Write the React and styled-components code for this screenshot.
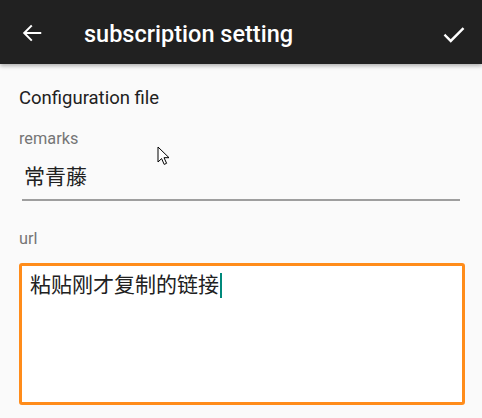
import React from 'react'
import styled, { createGlobalStyle } from 'styled-components'

const GlobalStyle = createGlobalStyle`
  html, body {
    margin: 0;
    padding: 0;
    background: #fafafa;
    font-family: Roboto, "Noto Sans CJK SC", sans-serif;
  }
`

export default function App() {
  return (
    <Page>
      <GlobalStyle />
      <Toolbar>
        <IconButton aria-label="back">
          <svg width="22" height="22" viewBox="0 0 24 24" fill="none" stroke="#fff" strokeWidth="2.2" strokeLinecap="square">
            <path d="M21 12H4M11 4.5L3.5 12l7.5 7.5" />
          </svg>
        </IconButton>
        <Title>subscription setting</Title>
        <IconButton aria-label="save" right>
          <svg width="26" height="26" viewBox="0 0 24 24" fill="none" stroke="#fff" strokeWidth="2.2" strokeLinecap="square">
            <path d="M4 12.5l5 5L20 6.5" />
          </svg>
        </IconButton>
      </Toolbar>
      <Content>
        <Section>Configuration file</Section>
        <Label>remarks</Label>
        <LineInput>常青藤</LineInput>
        <Label url>url</Label>
        <TextBox>
          粘贴刚才复制的链接<Caret />
        </TextBox>
      </Content>
      <Pointer width="14" height="20" viewBox="0 0 14 20">
        <path d="M1 1v15l3.6-3.4 2.6 5.8 2.4-1.1-2.6-5.6H12z" fill="#fff" stroke="#000" strokeWidth="1" strokeLinejoin="round" />
      </Pointer>
    </Page>
  )
}

const Page = styled.div`
  position: relative;
  width: 482px;
  height: 418px;
  overflow: hidden;
  background: #fafafa;
`

const Toolbar = styled.div`
  height: 64px;
  background: #212121;
  display: flex;
  align-items: center;
  padding: 0 10px 0 14px;
  box-shadow: 0 2px 4px rgba(0, 0, 0, 0.3);
  position: relative;
  z-index: 1;
`

const IconButton = styled.div`
  width: 36px;
  height: 36px;
  display: flex;
  align-items: center;
  justify-content: center;
  margin-left: ${props => (props.right ? 'auto' : '0')};
  margin-top: ${props => (props.right ? '6px' : '2px')};
`

const Title = styled.div`
  margin-left: 34px;
  color: #fff;
  font-size: 23.5px;
  font-weight: 500;
  margin-top: 3px;
`

const Content = styled.div`
  padding: 23px 17px 0 19px;
  display: flex;
  flex-direction: column;
`

const Section = styled.div`
  font-size: 18.5px;
  color: #212121;
  line-height: 22px;
`

const Label = styled.div`
  font-size: 16.3px;
  color: #757575;
  line-height: 20px;
  margin-top: ${props => (props.url ? '28px' : '20px')};
`

const LineInput = styled.div`
  margin: 15px 5px 0 3px;
  padding: 0 0 9px 2px;
  font-size: 21px;
  line-height: 26px;
  color: #212121;
  border-bottom: 2px solid #9e9e9e;
`

const TextBox = styled.div`
  margin-top: 14px;
  border: 3px solid #ff8c1a;
  border-radius: 3px;
  background: #fff;
  padding: 6px 8px;
  font-size: 21px;
  line-height: 26px;
  color: #212121;
  box-sizing: border-box;
  height: 142px;
`

const Caret = styled.span`
  display: inline-block;
  width: 2px;
  height: 25px;
  background: #00897b;
  vertical-align: -6px;
  margin-left: 1px;
`

const Pointer = styled.svg`
  position: absolute;
  left: 157px;
  top: 146px;
`
